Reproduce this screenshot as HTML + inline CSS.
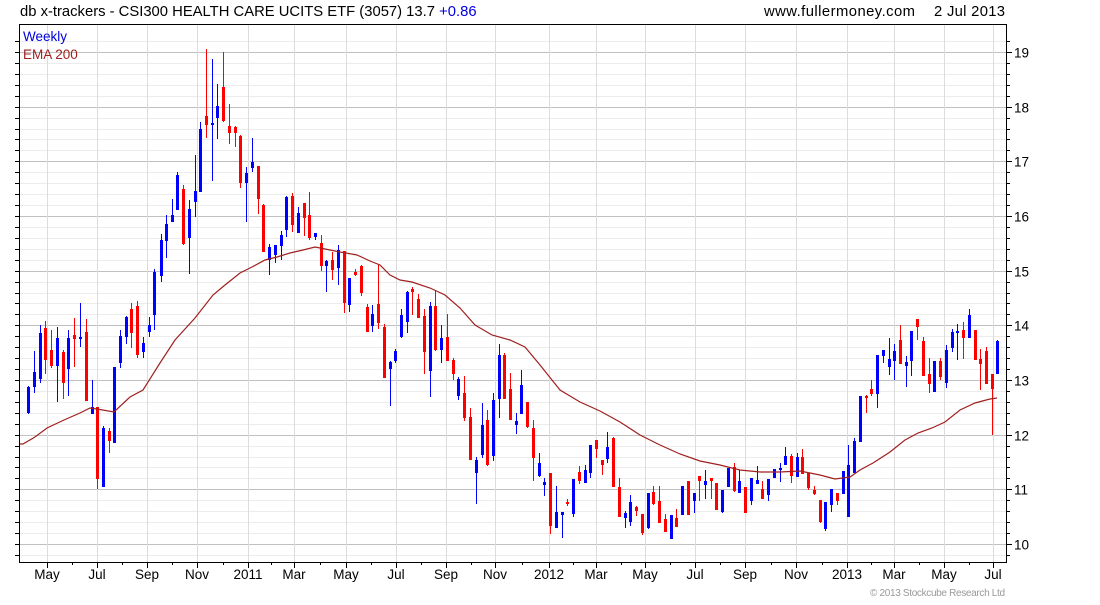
<!DOCTYPE html>
<html><head><meta charset="utf-8"><style>
html,body{margin:0;padding:0;background:#fff;}
body{width:1100px;height:600px;overflow:hidden;font-family:"Liberation Sans",Arial,sans-serif;}
svg text{font-family:"Liberation Sans",Arial,sans-serif;}
</style></head><body>
<svg id="c" width="1100" height="600" xmlns="http://www.w3.org/2000/svg" shape-rendering="crispEdges">
<text x="20" y="16" font-size="14.8" fill="#000">db x-trackers - CSI300 HEALTH CARE UCITS ETF (3057) 13.7 <tspan fill="#0000dd">+0.86</tspan></text>
<text x="764" y="16" font-size="14.8" fill="#000" textLength="151">www.fullermoney.com</text>
<text x="934" y="16" font-size="14.8" fill="#000" textLength="71">2 Jul 2013</text>
<g id="grid"></g>
<g id="cand"></g>
<polyline id="ema" fill="none" stroke="#a02020" stroke-width="1.2" shape-rendering="auto"></polyline>
<rect x="19.5" y="24.5" width="987" height="538" fill="none" stroke="#000" stroke-width="1"/>
<text x="23" y="41" font-size="13.5" fill="#0000dd">Weekly</text>
<text x="23" y="59" font-size="13.5" fill="#a02020">EMA 200</text>
<g id="lab"></g>
<text x="870" y="596" font-size="10" fill="#999" textLength="135">© 2013 Stockcube Research Ltd</text>
</svg>
<script>
var NS="http://www.w3.org/2000/svg";
function el(p,t,a){var e=document.createElementNS(NS,t);for(var k in a)e.setAttribute(k,a[k]);p.appendChild(e);return e;}
var g=document.getElementById('grid'),lab=document.getElementById('lab');
function Y(v){return 544-(v-10)*54.67;}
for(var i=0;i<=48;i++){var v=9.6+i*0.2;var y=Math.round(Y(v))+0.5;if(y<25||y>562)continue;
 var major=Math.abs(v-Math.round(v))<0.01;
 el(g,'line',{x1:20,x2:1006,y1:y,y2:y,stroke:major?'#c0c0c0':'#ececec'});
 el(g,'line',{x1:1006,x2:major?1012:1010,y1:y,y2:y,stroke:'#000'});
 el(g,'line',{x1:15,x2:19,y1:y,y2:y,stroke:'#000'});
 if(major){var t=el(lab,'text',{x:1014,y:y+5,'font-size':13.5,fill:'#000'});t.textContent=Math.round(v);}
}
var mx=[47,97,147,197,248,294,346,396,446,495,549,596,645,695,745,796,847,894,944,993];
var ml=['May','Jul','Sep','Nov','2011','Mar','May','Jul','Sep','Nov','2012','Mar','May','Jul','Sep','Nov','2013','Mar','May','Jul'];
for(var i=0;i<mx.length;i++){var x=mx[i]+0.5;
 el(g,'line',{x1:x,x2:x,y1:25,y2:562,stroke:'#dcdcdc'});
 el(g,'line',{x1:x,x2:x,y1:562,y2:568,stroke:'#000'});
 if(i>0){var h=Math.round((mx[i]+mx[i-1])/2)+0.5;el(g,'line',{x1:h,x2:h,y1:562,y2:565,stroke:'#000'});}
 var t=el(lab,'text',{x:mx[i],y:579,'font-size':13.5,fill:'#000','text-anchor':'middle'});t.textContent=ml[i];}
var D=[[28,386,414,387,413,'b'],[34,351,393,372,387,'b'],[40,325,383,333,379,'b'],[45,321,374,328,360,'r'],[51,330,368,350,366,'r'],[57,327,402,338,366,'b'],[63,350,399,352,383,'r'],[68,330,396,338,369,'b'],[74,318,367,335,339,'r'],[80,303,347,337,339,'b'],[86,319,401,332,401,'r'],[92,380,414,407,414,'b'],[97,407,489,407,479,'r'],[103,426,487,428,487,'b'],[109,428,453,431,441,'r'],[114,367,443,367,443,'b'],[120,330,368,336,363,'b'],[126,316,344,317,337,'b'],[131,303,348,309,333,'r'],[137,301,358,306,355,'r'],[143,337,358,343,352,'b'],[149,317,337,325,332,'b'],[154,269,330,272,315,'b'],
[161,234,282,240,276,'b'],[166,215,258,224,241,'b'],[172,199,222,215,222,'b'],[177,172,210,175,210,'b'],[183,185,245,189,244,'r'],[189,200,274,209,238,'b'],[195,155,217,191,202,'b'],[200,122,192,129,192,'b'],[206,49,138,116,125,'r'],[212,59,181,123,125,'b'],[217,84,139,106,118,'b'],[223,52,122,87,121,'r'],[229,104,144,126,133,'r'],[235,126,147,127,133,'r'],[240,135,188,136,183,'r'],[246,167,222,173,183,'b'],[252,138,172,162,168,'b'],[258,166,214,166,199,'r'],[263,204,252,205,252,'r'],[269,244,275,247,260,'b'],[275,245,263,245,255,'b'],[281,231,260,235,246,'b'],[286,196,237,197,230,'b'],[292,193,232,196,225,'r'],[298,207,233,213,233,'b'],[304,203,236,203,218,'r'],[309,192,240,215,238,'r'],[315,233,240,233,237,'b'],[321,235,271,243,266,'r'],[326,260,292,261,266,'b'],[332,252,280,260,270,'r'],[338,245,285,250,268,'b'],
[344,251,313,251,303,'r'],[349,278,312,278,305,'b'],[355,269,276,272,275,'r'],[361,265,296,266,293,'r'],[367,304,332,307,332,'r'],[372,305,332,314,326,'b'],[378,265,329,304,323,'r'],[384,324,378,327,378,'r'],[390,361,406,362,369,'b'],[395,349,363,351,361,'b'],[401,309,338,315,337,'b'],[407,291,333,292,322,'b'],[412,287,315,289,292,'r'],[418,294,318,299,318,'r'],[424,309,374,316,352,'r'],[430,302,397,306,371,'b'],[435,291,351,306,350,'r'],[441,325,363,338,350,'b'],[447,314,361,337,361,'r'],[453,358,380,360,374,'r'],[458,377,400,379,396,'b'],[464,376,421,393,418,'r'],[470,408,460,417,460,'r'],[476,457,504,460,473,'b'],[482,403,458,425,455,'b'],[487,410,466,420,465,'r'],[493,393,461,400,456,'b'],[499,344,418,355,399,'b'],[504,353,399,355,399,'r'],[510,373,420,389,420,'r'],[516,413,434,421,425,'b'],[521,370,414,385,414,'b'],[527,402,428,402,427,'r'],
[533,420,481,428,458,'r'],[539,453,477,463,476,'b'],[544,478,496,482,485,'b'],[550,473,534,473,526,'r'],[556,486,528,512,528,'b'],[562,512,538,512,515,'b'],[567,499,506,502,504,'r'],[573,479,517,479,514,'b'],[579,466,484,472,481,'r'],[585,465,483,470,483,'b'],[590,445,478,445,473,'b'],[596,440,458,440,449,'r'],[602,460,475,460,465,'r'],[607,432,463,447,459,'b'],[613,437,487,438,487,'r'],[619,478,517,487,517,'r'],[625,511,528,513,518,'b'],[630,495,526,502,522,'b'],[636,506,516,507,511,'r'],[642,514,535,514,533,'r'],[648,493,529,493,528,'b'],[653,486,505,492,504,'r'],[659,486,523,501,523,'r'],[665,514,532,519,532,'r'],[671,515,539,515,539,'b'],[676,509,527,518,527,'r'],[682,486,515,486,515,'b'],[688,481,515,481,515,'r'],[694,493,513,493,501,'b'],[699,476,501,476,481,'r'],[705,470,499,481,485,'b'],[711,478,499,478,481,'r'],[716,483,510,483,510,'r'],
[722,490,513,490,512,'b'],[728,468,487,468,487,'b'],[734,463,492,467,491,'r'],[739,470,493,481,493,'b'],[745,487,513,487,513,'r'],[751,478,505,478,501,'b'],[757,466,484,480,484,'b'],[762,481,499,489,499,'r'],[768,479,501,479,495,'b'],[774,469,478,469,478,'b'],[780,463,482,468,470,'b'],[785,447,465,456,465,'b'],[791,454,483,456,476,'r'],[797,453,477,457,477,'b'],[802,449,474,457,474,'r'],[808,473,490,473,488,'r'],[814,486,495,490,494,'r'],[820,500,523,500,522,'r'],[825,502,531,502,529,'b'],[831,489,512,489,505,'b'],[837,493,505,493,501,'r'],[843,471,494,471,494,'b'],[848,445,517,465,517,'b'],[854,438,473,441,473,'b'],
[860,396,442,396,442,'b'],[866,395,413,396,398,'r'],[871,380,396,389,394,'r'],[877,355,408,355,394,'b'],[883,350,363,350,356,'b'],[889,338,375,359,367,'b'],[894,344,380,351,361,'b'],[900,325,364,340,364,'r'],[906,356,387,362,366,'b'],[911,331,376,331,361,'b'],[917,319,340,319,327,'r'],[923,337,376,341,376,'r'],[929,358,393,374,384,'r'],[934,361,392,361,392,'b'],[940,358,380,361,377,'r'],[946,345,388,350,383,'b'],[952,329,352,332,348,'b'],[957,324,360,331,333,'b'],[963,322,359,330,338,'r'],[969,309,338,315,338,'b'],[975,330,360,330,360,'r'],[980,349,390,359,364,'r'],[986,347,384,351,384,'r'],[992,374,435,374,389,'r'],[997,340,374,341,374,'b']];
var c=document.getElementById('cand');
D.forEach(function(d){var col=d[5]=='b'?'#0000ff':'#ff0000';
 el(c,'rect',{x:d[0],y:d[1],width:1,height:Math.max(1,d[2]-d[1]),fill:col});
 el(c,'rect',{x:d[0]-1,y:d[3],width:3,height:Math.max(2,d[4]-d[3]),fill:col});});
var E=[[20,444],[23,444],[35,437],[47,428],[64,420],[80,413],[90,408],[97,409],[114,412],[130,397],[143,390],[160,363],[175,340],[195,318],[213,295],[225,285],[240,273],[252,267],[265,260],[277,257],[290,253],[303,250],[315,247],[330,250],[340,252],[357,255],[370,261],[380,265],[390,275],[400,280],[412,282],[430,288],[445,295],[460,308],[475,325],[492,335],[510,340],[525,347],[540,365],[560,390],[580,402],[600,411],[620,422],[640,435],[660,445],[680,454],[700,461],[720,465],[740,470],[760,472],[780,472],[800,471],[820,475],[835,479],[850,477],[860,470],[873,463],[890,452],[905,440],[918,433],[932,428],[945,422],[960,410],[975,403],[990,399],[997,398]];
document.getElementById('ema').setAttribute('points',E.map(function(p){return p.join(',');}).join(' '));
</script>
</body></html>
